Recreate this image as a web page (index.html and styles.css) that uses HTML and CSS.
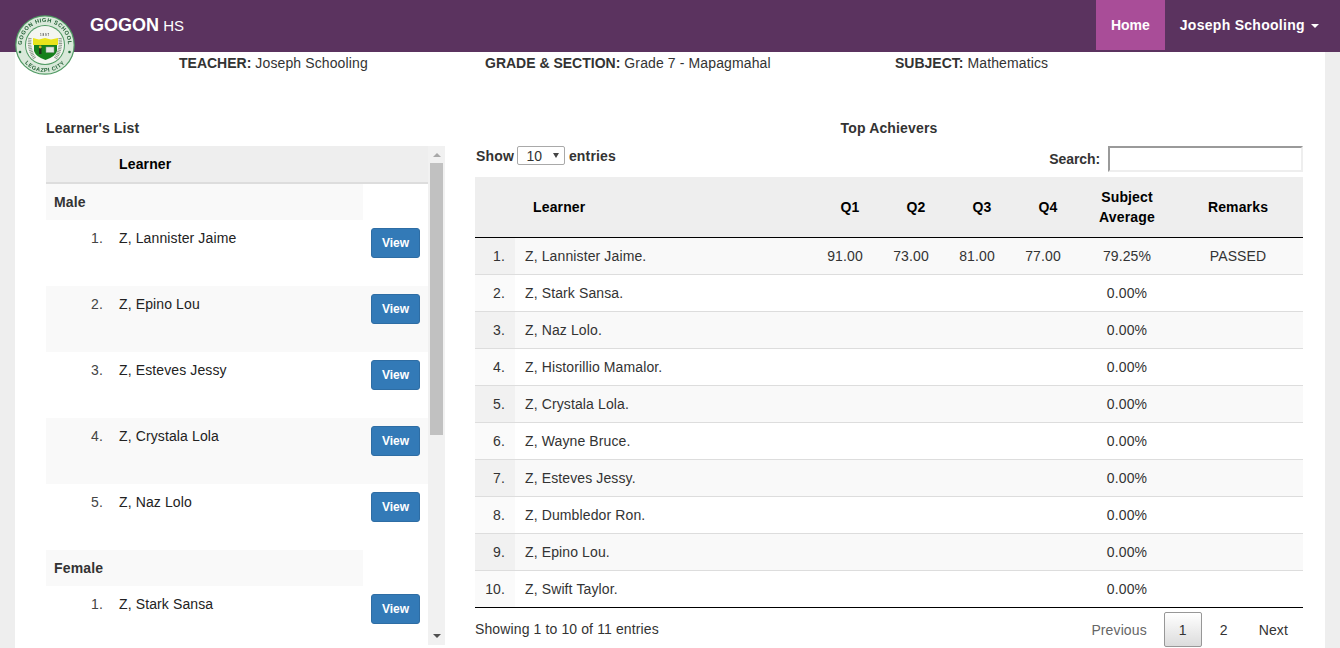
FILE: index.html
```html
<!DOCTYPE html>
<html lang="en">
<head>
<meta charset="utf-8">
<title>Gogon HS</title>
<link rel="stylesheet" href="styles.css">
</head>
<body>
<nav class="navbar">
  <a class="brand"><b>GOGON</b> <span>HS</span></a>
  <ul class="nav">
    <li class="active"><a>Home</a></li>
    <li class="user"><a>Joseph Schooling <i class="caret"></i></a></li>
  </ul>
</nav>
<svg class="logo" viewBox="0 0 60 60" role="img" aria-label="Gogon High School seal">
  <defs>
    <path id="arcTop" d="M8.4 37.9A23 23 0 1 1 51.6 37.9"/>
    <path id="arcBot" d="M6.6 43.5A27 27 0 0 0 53.4 43.5"/>
    <filter id="soft"><feGaussianBlur stdDeviation=".25"/></filter>
  </defs>
  <g filter="url(#soft)">
    <circle cx="30" cy="30" r="29.800" fill="#4f9a63"/>
    <circle cx="30" cy="30" r="28.600" fill="#d9e9da"/>
    <circle cx="30" cy="30" r="20" fill="#4f9a63"/>
    <circle cx="30" cy="30" r="19" fill="#f4f6f1"/>
    <text class="seal-text"><textPath href="#arcTop" startOffset="50%" text-anchor="middle">GOGON HIGH SCHOOL</textPath></text>
    <text class="seal-text"><textPath href="#arcBot" startOffset="50%" text-anchor="middle">LEGAZPI CITY</textPath></text>
    <circle cx="5" cy="37" r="1.300" fill="#1f6b38"/>
    <circle cx="54.500" cy="37" r="1.300" fill="#1f6b38"/>
    <text x="30" y="21" class="seal-year">1897</text>
    <path d="M15 23q-2 11 5 21M45 23q2 11-5 21" fill="none" stroke="#8f9e90" stroke-width="3.500" stroke-dasharray="1 .7"/>
    <path d="M18 23l6 1.500 6-1.500 6 1.500 7-1.500v7H18z" fill="#e9e41c"/>
    <path d="M19 30h23v6q-2 6-11.500 9q-9.500-3-11.500-9z" fill="#15801f"/>
    <rect x="31" y="32" width="8" height="5.500" fill="#e2e6e2" stroke="#8a9a8a" stroke-width=".5"/>
    <rect x="24" y="33" width="2.500" height="6" fill="#20331f"/>
    <circle cx="25.200" cy="32" r="1.400" fill="#d9b323"/>
  </g>
</svg>

<main class="page">
  <section class="info">
    <p><b>TEACHER:</b> Joseph Schooling</p>
    <p><b>GRADE &amp; SECTION:</b> Grade 7 - Mapagmahal</p>
    <p><b>SUBJECT:</b> Mathematics</p>
  </section>

  <section class="columns">
    <div class="left">
      <h4 class="title">Learner's List</h4>
      <div class="list-box">
        <div class="list-scroll">
          <table class="list">
            <thead><tr><th class="c-no"></th><th class="c-name">Learner</th><th class="c-btn"></th></tr></thead>
            <tbody>
              <tr class="group"><td colspan="2">Male</td><td class="blank"></td></tr>
              <tr><td class="no">1.</td><td>Z, Lannister Jaime</td><td class="act"><button class="btn">View</button></td></tr>
              <tr class="alt"><td class="no">2.</td><td>Z, Epino Lou</td><td class="act"><button class="btn">View</button></td></tr>
              <tr><td class="no">3.</td><td>Z, Esteves Jessy</td><td class="act"><button class="btn">View</button></td></tr>
              <tr class="alt"><td class="no">4.</td><td>Z, Crystala Lola</td><td class="act"><button class="btn">View</button></td></tr>
              <tr><td class="no">5.</td><td>Z, Naz Lolo</td><td class="act"><button class="btn">View</button></td></tr>
              <tr class="group"><td colspan="2">Female</td><td class="blank"></td></tr>
              <tr><td class="no">1.</td><td>Z, Stark Sansa</td><td class="act"><button class="btn">View</button></td></tr>
            </tbody>
          </table>
        </div>
        <div class="scrollbar" aria-hidden="true">
          <i class="arrow up"></i>
          <i class="thumb"></i>
          <i class="arrow down"></i>
        </div>
      </div>
    </div>

    <div class="right">
      <h4 class="title center">Top Achievers</h4>
      <div class="controls">
        <label class="length">Show <span class="select-wrap"><select class="select"><option>10</option></select></span> entries</label>
        <label class="search">Search: <input class="search-input" type="search"></label>
      </div>
      <table class="grades">
        <thead>
          <tr><th class="g-no"></th><th class="g-name">Learner</th><th class="g-q">Q1</th><th class="g-q">Q2</th><th class="g-q">Q3</th><th class="g-q">Q4</th><th class="g-avg">Subject Average</th><th class="g-rem">Remarks</th></tr>
        </thead>
        <tbody>
          <tr><td class="num">1.</td><td>Z, Lannister Jaime.</td><td class="c">91.00</td><td class="c">73.00</td><td class="c">81.00</td><td class="c">77.00</td><td class="c">79.25%</td><td class="c">PASSED</td></tr>
          <tr><td class="num">2.</td><td>Z, Stark Sansa.</td><td></td><td></td><td></td><td></td><td class="c">0.00%</td><td></td></tr>
          <tr><td class="num">3.</td><td>Z, Naz Lolo.</td><td></td><td></td><td></td><td></td><td class="c">0.00%</td><td></td></tr>
          <tr><td class="num">4.</td><td>Z, Historillio Mamalor.</td><td></td><td></td><td></td><td></td><td class="c">0.00%</td><td></td></tr>
          <tr><td class="num">5.</td><td>Z, Crystala Lola.</td><td></td><td></td><td></td><td></td><td class="c">0.00%</td><td></td></tr>
          <tr><td class="num">6.</td><td>Z, Wayne Bruce.</td><td></td><td></td><td></td><td></td><td class="c">0.00%</td><td></td></tr>
          <tr><td class="num">7.</td><td>Z, Esteves Jessy.</td><td></td><td></td><td></td><td></td><td class="c">0.00%</td><td></td></tr>
          <tr><td class="num">8.</td><td>Z, Dumbledor Ron.</td><td></td><td></td><td></td><td></td><td class="c">0.00%</td><td></td></tr>
          <tr><td class="num">9.</td><td>Z, Epino Lou.</td><td></td><td></td><td></td><td></td><td class="c">0.00%</td><td></td></tr>
          <tr><td class="num">10.</td><td>Z, Swift Taylor.</td><td></td><td></td><td></td><td></td><td class="c">0.00%</td><td></td></tr>
        </tbody>
      </table>
      <div class="footer">
        <span class="count">Showing 1 to 10 of 11 entries</span>
        <span class="pager">
          <a class="pg muted">Previous</a>
          <a class="pg current">1</a>
          <a class="pg">2</a>
          <a class="pg">Next</a>
        </span>
      </div>
    </div>
  </section>
</main>
</body>
</html>
```
FILE: styles.css
```css
* { box-sizing: border-box; }
html, body { height: 648px; overflow: hidden; }
body {
  margin: 0;
  background: #eee;
  color: #333;
  font: 14px/20px "Liberation Sans", Arial, sans-serif;
  letter-spacing: .12px;
}
th, .title, label { letter-spacing: .15px; }

.navbar {
  height: 52px;
  background: #5b335f;
  color: #fff;
  display: flex;
  justify-content: space-between;
  padding: 0 21px 0 90px;
}
.brand { line-height: 50px; font-size: 15px; letter-spacing: 0; }
.brand b { font-size: 18px; }
.nav { list-style: none; display: flex; margin: 0; padding: 0; height: 50px; }
.nav a { display: block; line-height: 50px; padding: 0 15px; font-weight: bold; letter-spacing: .28px; }
.nav .active { background: #a94d98; }
.nav .active a { letter-spacing: 0; }
.user a { padding-right: 0; }
.caret {
  display: inline-block;
  margin-left: 2px;
  vertical-align: middle;
  border-top: 4px solid #fff;
  border-left: 4px solid transparent;
  border-right: 4px solid transparent;
}

.logo { position: absolute; left: 15px; top: 15px; width: 60px; height: 60px; }
.seal-text { font: bold 5.6px "Liberation Sans", sans-serif; fill: #1f5f33; letter-spacing: .55px; }
.seal-year { font: bold 3px "Liberation Sans", sans-serif; fill: #555; text-anchor: middle; letter-spacing: .8px; }

.page {
  margin: 0 15px;
  height: 596px;
  background: #fff;
  overflow: hidden;
}
.info {
  display: grid;
  grid-template-columns: 306px 410px 1fr;
  padding: 1px 0 0 164px;
}
.info p { margin: 0; }
.info b { letter-spacing: 0; }

.columns { display: flex; padding: 45px 22px 0 31px; }
.left { width: 399px; margin-right: 30px; }
.right { width: 828px; }
.title { margin: 0 0 8px; font-size: 14px; line-height: 20px; font-weight: bold; }
.center { text-align: center; }

.list-box { display: flex; height: 499px; }
.list-scroll { width: 382px; overflow: hidden; }
.list { width: 382px; border-collapse: collapse; table-layout: fixed; }
.list th { height: 37px; background: #eee; border-bottom: 2px solid #ddd; color: #000; text-align: left; padding: 0 8px; }
.c-no { width: 65px; }
.c-btn { width: 65px; }
.list .c-name { padding-left: 8px; }
.list td { height: 66px; padding: 8px; vertical-align: top; color: #222; }
.list .group td { height: 36px; background: #f9f9f9; font-weight: bold; letter-spacing: .15px; color: #333; }
.list .group .blank { background: #fff; }
.list .alt td { background: #f9f9f9; }
.list .no { text-align: right; color: #444; padding-right: 8px; }
.list .act { padding: 8px 8px 0 8px; }
.btn {
  display: block;
  width: 49px;
  height: 30px;
  padding: 0;
  background: #337ab7;
  border: 1px solid #2e6da4;
  border-radius: 3px;
  color: #fff;
  font: bold 12px "Liberation Sans", sans-serif;
}
.scrollbar { width: 17px; background: #f1f1f1; display: flex; flex-direction: column; align-items: center; }
.thumb { display: block; width: 13px; height: 272px; background: #c1c1c1; margin-bottom: auto; }
.arrow { display: block; flex: none; width: 0; border-left: 4px solid transparent; border-right: 4px solid transparent; }
.up { border-bottom: 4px solid #a8a8a8; margin: 7px 0 6px; }
.down { border-top: 4px solid #505050; margin-bottom: 7px; }

.controls { display: flex; justify-content: space-between; height: 31px; }
.length, .search { font-weight: bold; }
.length { display: flex; align-items: flex-start; gap: 3.5px; padding-left: 1px; line-height: 21px; }
.select-wrap { position: relative; display: block; }
.select-wrap::after {
  content: "";
  position: absolute;
  right: 6px;
  top: 7px;
  border-top: 5px solid #444;
  border-left: 3px solid transparent;
  border-right: 3px solid transparent;
}
.select {
  appearance: none;
  display: block;
  width: 48px;
  height: 19px;
  padding: 0 0 0 8px;
  background: #fff;
  border: 1px solid #a9a9a9;
  border-radius: 2px;
  color: #333;
  font: 14px "Liberation Sans", sans-serif;
}
.search { display: flex; gap: 8px; line-height: 26px; letter-spacing: -.1px; }
.search-input { width: 195px; height: 26px; background: #fff; border: 2px inset #eee; margin: 0; padding: 1px; }

.grades { width: 828px; border-collapse: collapse; table-layout: fixed; }
.grades th { height: 60px; background: #eee; color: #000; border-bottom: 1px solid #000; padding: 0; text-align: center; }
.g-no { width: 40px; }
.g-name { width: 297px; }
.grades .g-name { text-align: left; padding-left: 18px; }
.g-q { width: 66px; }
.grades .g-q { padding-left: 10px; }
.g-avg { width: 102px; }
.grades .g-avg { padding: 0 20px; }
.g-rem { width: 125px; }
.grades .g-rem, .grades .c:last-child { padding-right: 5px; }
.grades td { height: 37px; padding: 0 10px; border-bottom: 1px solid #ddd; }
.grades tr:last-child td { border-bottom-color: #000; }
.grades tbody tr:nth-child(odd) td { background: #f9f9f9; }
.grades .num { text-align: right; background: #fafafa; }
.grades tbody tr:nth-child(odd) .num { background: #f1f1f1; }
.grades .c { text-align: center; padding: 0; }

.footer { display: flex; justify-content: space-between; padding-top: 4px; }
.count { padding-top: 7px; }
.pager { display: flex; }
.pg { padding: 8px 14px 7px; height: 35px; margin-left: 3px; color: #333; line-height: 20px; }
.pg:last-child { padding-right: 15px; }
.muted { color: #666; }
.current {
  padding: 7px 0 0;
  width: 38px;
  margin-right: 1px;
  text-align: center;
  border: 1px solid #979797;
  border-radius: 2px;
  background: linear-gradient(#fff, #dcdcdc);
}
```
